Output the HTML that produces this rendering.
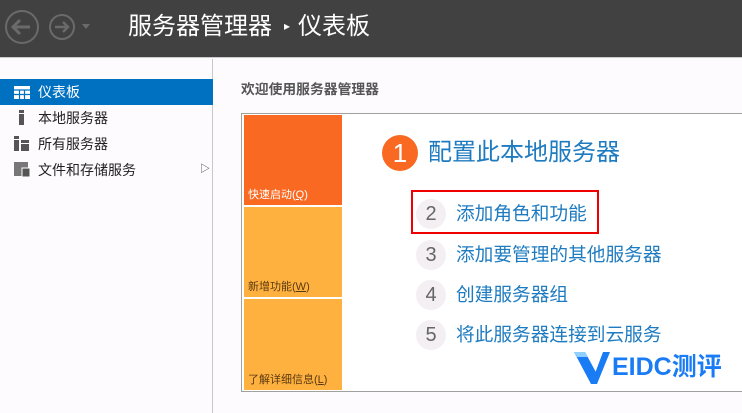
<!DOCTYPE html><html><head><meta charset="utf-8"><style>
*{margin:0;padding:0;box-sizing:border-box}
body{width:742px;height:413px;overflow:hidden;background:#fdfbfd;font-family:"Liberation Sans","Noto Sans CJK SC",sans-serif;position:relative}
.hd{position:absolute;left:0;top:0;width:742px;height:58px;background:#414141;border-bottom:1px solid #ccc}
.ttl{position:absolute;left:128px;top:10px;color:#fff;font-size:24px;line-height:34px;white-space:nowrap}
.side{position:absolute;left:0;top:59px;width:213px;height:354px;border-right:1px solid #c8c8c8}
.it{position:absolute;left:0;width:213px;height:26px;font-size:14px;line-height:26px;color:#222;padding-left:38px}
.it.sel{background:#0070c0;color:#fff}
.ic{position:absolute;left:14px;top:7px}
.box{position:absolute;left:241px;top:113px;width:520px;height:279px;border:1px solid #a0a0a0;background:#fff}
.tile{position:absolute;left:2px;width:98px;font-size:11px;color:#fff;padding-left:4px}
.c{position:absolute;border-radius:50%;text-align:center;font-family:"Liberation Sans",sans-serif}
.lk{position:absolute;color:#1e7bc0;white-space:nowrap}
.n{background:#f3eff3;color:#666;font-size:20px;line-height:30px;width:30px;height:30px;left:416px}
.s{left:456px;font-size:18.7px;line-height:24px}
</style></head><body>
<div class="hd">
<svg width="100" height="58" style="position:absolute;left:0;top:0">
<circle cx="22" cy="27" r="16" fill="none" stroke="#6a6a6a" stroke-width="2"/>
<path d="M30 27H14M20 20l-7 7 7 7" fill="none" stroke="#6a6a6a" stroke-width="3"/>
<circle cx="62" cy="27" r="12" fill="none" stroke="#6a6a6a" stroke-width="2"/>
<path d="M55 27h13M63 22l5 5-5 5" fill="none" stroke="#6a6a6a" stroke-width="2.5"/>
<path d="M82 24h8l-4 5z" fill="#6a6a6a"/>
</svg>
<div class="ttl">服务器管理器<span style="font-size:12px;position:relative;top:-4px;margin:0 8px 0 12px">▸</span>仪表板</div>
</div>
<div class="side">
<div class="it sel" style="top:20px"><svg class="ic" width="16" height="13"><rect width="16" height="13" fill="#fff"/><path d="M0 4h16M0 8.5h16M5.5 4v9M10.5 4v9" stroke="#0070c0" stroke-width="1.2"/></svg>仪表板</div>
<div class="it" style="top:46px"><svg class="ic" width="16" height="15" style="top:5px"><rect x="5" width="5" height="3" fill="#555"/><rect x="5" y="4" width="5" height="11" fill="#555"/></svg>本地服务器</div>
<div class="it" style="top:72px"><svg class="ic" width="16" height="15" style="top:5px"><rect x="0" width="5" height="3" fill="#555"/><rect x="0" y="4" width="5" height="11" fill="#555"/><rect x="7" y="4" width="8" height="3" fill="#555"/><rect x="7" y="8" width="8" height="7" fill="#555"/></svg>所有服务器</div>
<div class="it" style="top:98px"><svg class="ic" width="18" height="15" style="top:5px"><rect x="0" y="0" width="14" height="14" fill="#777"/><rect x="8" y="6" width="8" height="9" fill="#555" stroke="#fff"/></svg>文件和存储服务<span style="position:absolute;left:200px;font-size:10px;color:#333">▷</span></div>
</div>
<div style="position:absolute;left:241px;top:78px;font-size:13.8px;font-weight:bold;color:#555">欢迎使用服务器管理器</div>
<div class="box">
<div class="tile" style="top:1px;height:90px;background:#f96922"><span style="position:absolute;bottom:3px">快速启动(<u>Q</u>)</span></div>
<div class="tile" style="top:93px;height:90px;background:#ffb140;color:#5a3a10"><span style="position:absolute;bottom:3px">新增功能(<u>W</u>)</span></div>
<div class="tile" style="top:185px;height:91px;background:#ffb140;color:#5a3a10"><span style="position:absolute;bottom:3px">了解详细信息(<u>L</u>)</span></div>
</div>
<div class="c" style="left:382px;top:135px;width:36px;height:36px;background:#f96922;color:#fff;font-size:26px;line-height:36px">1</div>
<div class="lk" style="left:428px;top:138px;font-size:24px;line-height:30px">配置此本地服务器</div>
<div style="position:absolute;left:411px;top:190px;width:188px;height:44px;border:2px solid #e00"></div>
<div class="c n" style="top:199px">2</div>
<div class="lk s" style="top:202px">添加角色和功能</div>
<div class="c n" style="top:240px">3</div>
<div class="lk s" style="top:243px">添加要管理的其他服务器</div>
<div class="c n" style="top:280px">4</div>
<div class="lk s" style="top:283px">创建服务器组</div>
<div class="c n" style="top:320px">5</div>
<div class="lk s" style="top:323px">将此服务器连接到云服务</div>
<svg width="42" height="40" style="position:absolute;left:572px;top:346px"><path d="M2 6h11l13 24-7 8z" fill="#1a7cf5"/><path d="M2 6h11l3 5H5z" fill="#8fd0ff"/><path d="M19 38l12-32h7L25 38z" fill="#1a7cf5"/></svg>
<div style="position:absolute;left:612px;top:352px;color:#1a7cf5;font-size:25px;font-weight:bold;line-height:30px">EIDC测评</div>
</body></html>
